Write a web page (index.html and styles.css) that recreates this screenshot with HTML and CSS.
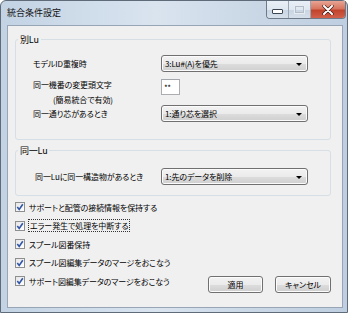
FILE: index.html
```html
<!DOCTYPE html>
<html lang="ja">
<head>
    <meta charset="UTF-8" />
    <title>統合条件設定</title>
    <link rel="stylesheet" href="styles.css">
</head>
<body>
    <div class="window">
        <div class="titlebar">
            <span class="title">統合条件設定</span>
            <div class="controls">
                <div class="ctl ctl-min"><span class="min-bar"></span></div>
                <div class="ctl ctl-max"><span class="max-box"></span></div>
                <div class="ctl ctl-close">
                    <svg width="12" height="10" viewBox="0 0 12 10">
                        <path d="M2 1 L10 9 M10 1 L2 9" stroke="#3a1410" stroke-width="3.2" stroke-linecap="round"/>
                        <path d="M2 1 L10 9 M10 1 L2 9" stroke="#ffffff" stroke-width="2" stroke-linecap="round"/>
                    </svg>
                </div>
            </div>
        </div>

        <div class="client">
            <fieldset class="group group-1">
                <legend>別Lu</legend>
                <div class="rows">
                    <div class="row row-combo">
                        <span class="label">モデルID重複時</span>
                        <div class="combo"><span>3:Lu#(A)を優先</span><i class="arrow"></i></div>
                    </div>
                    <div class="row row-text">
                        <span class="label label-2">同一機番の変更頭文字<br><span class="sub">(簡易統合で有効)</span></span>
                        <div class="textbox">**</div>
                    </div>
                    <div class="row row-combo">
                        <span class="label">同一通り芯があるとき</span>
                        <div class="combo"><span>1:通り芯を選択</span><i class="arrow"></i></div>
                    </div>
                </div>
            </fieldset>

            <fieldset class="group group-2">
                <legend>同一Lu</legend>
                <div class="rows">
                    <div class="row row-combo">
                        <span class="label label-indent">同一Luに同一構造物があるとき</span>
                        <div class="combo"><span>1:先のデータを削除</span><i class="arrow"></i></div>
                    </div>
                </div>
            </fieldset>

            <div class="bottom">
                <div class="checks">
                    <label class="check"><span class="box"><svg width="10" height="10" viewBox="0 0 10 10"><path d="M2.3 5 L4.2 7.4 L7.8 2.2" fill="none" stroke="#2f55a8" stroke-width="1.6"/></svg></span>サポートと配管の接続情報を保持する</label>
                    <label class="check"><span class="box"><svg width="10" height="10" viewBox="0 0 10 10"><path d="M2.3 5 L4.2 7.4 L7.8 2.2" fill="none" stroke="#2f55a8" stroke-width="1.6"/></svg></span><span class="focus">エラー発生で処理を中断する</span></label>
                    <label class="check"><span class="box"><svg width="10" height="10" viewBox="0 0 10 10"><path d="M2.3 5 L4.2 7.4 L7.8 2.2" fill="none" stroke="#2f55a8" stroke-width="1.6"/></svg></span>スプール図番保持</label>
                    <label class="check"><span class="box"><svg width="10" height="10" viewBox="0 0 10 10"><path d="M2.3 5 L4.2 7.4 L7.8 2.2" fill="none" stroke="#2f55a8" stroke-width="1.6"/></svg></span>スプール図編集データのマージをおこなう</label>
                    <label class="check"><span class="box"><svg width="10" height="10" viewBox="0 0 10 10"><path d="M2.3 5 L4.2 7.4 L7.8 2.2" fill="none" stroke="#2f55a8" stroke-width="1.6"/></svg></span>サポート図編集データのマージをおこなう</label>
                </div>
                <div class="buttons">
                    <button class="btn btn-apply">適用</button>
                    <button class="btn btn-cancel">キャンセル</button>
                </div>
            </div>
        </div>
    </div>
</body>
</html>
```

FILE: styles.css
```css
:root {
    --ui-font: "Noto Sans CJK JP", "Noto Sans", sans-serif;
    --face: #f0f0f0;
    --group-line: #d5dfe5;
    --combo-line: #707070;
}

html, body {
    margin: 0;
    padding: 0;
    background: #ffffff;
}

body {
    width: 350px;
    height: 314px;
    font-family: var(--ui-font);
    font-size: 8px;
    line-height: 11px;
    letter-spacing: -0.1px;
    font-feature-settings: "palt";
    color: #000;
}

.window {
    width: 348px;
    height: 313px;
    box-sizing: border-box;
    border: 1px solid #5f6b79;
    border-radius: 6px 6px 0 0;
    background: linear-gradient(90deg, #c3d3e4 0%, #d9e4ef 45%, #cbd8e6 70%, #bfcfe1 100%);
    display: flex;
    flex-direction: column;
}

.titlebar {
    height: 24px;
    flex: none;
    display: flex;
    justify-content: space-between;
    align-items: flex-start;
    padding: 0 1px 0 6px;
}

.title {
    margin-top: 6px;
    font-size: 9px;
    letter-spacing: 0;
    color: #111;
}

.controls {
    display: flex;
    height: 17px;
    border: 1px solid #6f7a88;
    border-top: none;
    border-radius: 0 0 4px 4px;
    overflow: hidden;
}

.ctl {
    height: 17px;
    display: flex;
    align-items: center;
    justify-content: center;
}

.ctl-min,
.ctl-max {
    width: 21px;
    background: linear-gradient(#e9eff6 0%, #dfe7f0 50%, #c8d4e2 51%, #d6e0eb 100%);
    border-right: 1px solid #9aa6b4;
}

.min-bar {
    width: 9px;
    height: 3px;
    margin-top: 4px;
    background: #fff;
    border: 1px solid #3d4754;
    border-radius: 1px;
}

.max-box {
    width: 7px;
    height: 5px;
    border: 1px solid #b4bcc7;
    outline: 1px solid #e8edf3;
    background: transparent;
}

.ctl-close {
    width: 34px;
    background: linear-gradient(#e8a595 0%, #d8755f 45%, #c2432c 55%, #d2604b 100%);
}

.client {
    flex: 1;
    margin: 0 4px 4px 6px;
    border: 1px solid #97a5b6;
    background: var(--face);
    padding: 8px 11px 0 7px;
    display: flex;
    flex-direction: column;
}

.group {
    margin: 0;
    padding: 0;
    border: 1px solid var(--group-line);
    border-radius: 3px;
    min-width: 0;
}

.group legend {
    margin-left: 2px;
    padding: 0 2px;
    font-size: 9px;
    line-height: 11px;
    letter-spacing: -0.2px;
}

.group-1 .rows {
    padding: 10px 22px 17px 17px;
}

.group-2 {
    margin-top: 5px;
}

.group-2 .rows {
    padding: 12px 22px 10px 17px;
}

.row {
    display: grid;
    grid-template-columns: 128px 147px;
}

.row-combo {
    height: 17px;
    align-items: center;
}

.row-text {
    margin-top: 4px;
    height: 29px;
    align-items: start;
}

.label-2 {
    line-height: 15px;
    margin-top: 1px;
}

.label-2 .sub {
    padding-left: 20px;
}

.label-indent {
    padding-left: 2px;
}

.combo {
    height: 17px;
    box-sizing: border-box;
    border: 1px solid var(--combo-line);
    border-radius: 3px;
    background: linear-gradient(#f2f2f2 0%, #ebebeb 50%, #dddddd 51%, #cfcfcf 100%);
    box-shadow: inset 0 0 0 1px #fbfbfb;
    display: flex;
    align-items: center;
    justify-content: space-between;
    padding: 0 5px 0 3px;
}

.arrow {
    width: 0;
    height: 0;
    border-left: 3px solid transparent;
    border-right: 3px solid transparent;
    border-top: 3px solid #000;
    margin-top: 1px;
}

.textbox {
    width: 19px;
    height: 16px;
    box-sizing: border-box;
    margin-top: 3px;
    border: 1px solid #abadb3;
    border-top-color: #a3a6ad;
    background: #fff;
    padding: 3px 0 0 2px;
    line-height: 9px;
    letter-spacing: -0.5px;
}

.bottom {
    display: flex;
    justify-content: space-between;
    margin-top: 2px;
}

.checks {
    display: flex;
    flex-direction: column;
}

.check {
    height: 18.5px;
    display: flex;
    align-items: center;
    gap: 4px;
    white-space: nowrap;
}

.box {
    width: 10px;
    height: 10px;
    flex: none;
    box-sizing: border-box;
    border: 1px solid #8e8f8f;
    background: linear-gradient(135deg, #e6e6e6, #ffffff);
    display: flex;
    align-items: center;
    justify-content: center;
}

.box svg {
    display: block;
    margin: -1px;
}

.focus {
    outline: 1px dotted #333;
    outline-offset: 0;
    padding: 0 1px;
}

.buttons {
    display: flex;
    gap: 12px;
    align-self: flex-end;
    margin-bottom: -2px;
}

.btn {
    height: 17px;
    padding: 0;
    font-family: var(--ui-font);
    font-size: 8px;
    letter-spacing: -0.1px;
    font-feature-settings: "palt";
    color: #000;
    border: 1px solid #707070;
    border-radius: 3px;
    background: linear-gradient(#f2f2f2 0%, #ebebeb 50%, #dddddd 51%, #cfcfcf 100%);
    box-shadow: inset 0 0 0 1px #fcfcfc;
}

.btn-apply {
    width: 55px;
}

.btn-cancel {
    width: 56px;
}
```
